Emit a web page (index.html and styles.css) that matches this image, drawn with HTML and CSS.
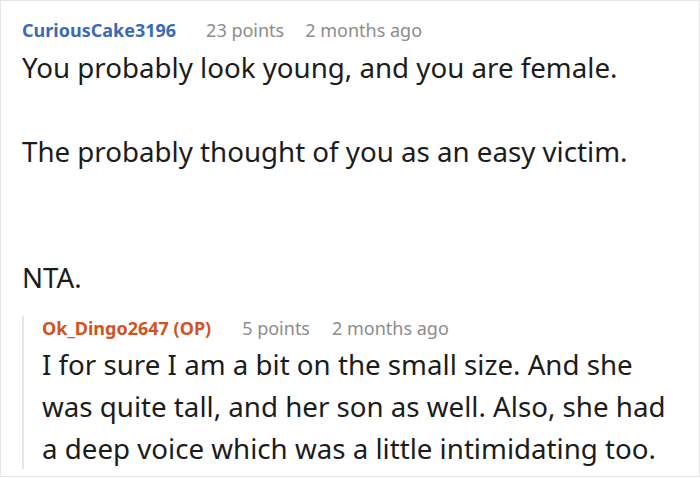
FILE: index.html
```html
<!DOCTYPE html>
<html>
<head>
<meta charset="utf-8">
<link rel="stylesheet" href="styles.css">
</head>
<body>
<div class="page">
  <div class="comment">
    <div class="meta">
      <span class="author">CuriousCake3196</span>
      <span class="points">23 points</span>
      <span class="time">2 months ago</span>
    </div>
    <div class="body">You probably look young, and you are female.<br><br>The probably thought of you as an easy victim.<br><br><br>NTA.</div>
  </div>
  <div class="reply">
    <div class="meta">
      <span class="author op">Ok_Dingo2647 (OP)</span>
      <span class="points">5 points</span>
      <span class="time">2 months ago</span>
    </div>
    <div class="body">I for sure I am a bit on the small size. And she was quite tall, and her son as well. Also, she had a deep voice which was a little intimidating too.</div>
  </div>
</div>
</body>
</html>
```

FILE: styles.css
```css
html, body {
  margin: 0;
  padding: 0;
  background: #ffffff;
}
body {
  font-family: "Noto Sans", "Open Sans", sans-serif;
  color: #1c1c1c;
}
.page {
  box-sizing: border-box;
  width: 700px;
  height: 477px;
  border: 1px solid #e6e6e6;
  padding: 17px 20px 0 21px;
  overflow: hidden;
}
.meta {
  display: flex;
  align-items: baseline;
  font-size: 18px;
  line-height: 24px;
  color: #8c8c8c;
  white-space: nowrap;
}
.author {
  font-weight: 700;
  color: #3b69b5;
  margin-right: 30px;
}
.author.op {
  color: #d4521d;
  margin-right: 31px;
}
.points {
  margin-right: 21px;
}
.reply .points {
  margin-right: 22px;
}
.body {
  font-size: 27.7px;
  line-height: 42px;
  margin-top: 4px;
}
.reply {
  margin-top: 27px;
  border-left: 2px solid #e6e6e6;
  padding-left: 18px;
}
.reply .meta {
  margin-top: -9px;
}
.reply .body {
  margin-top: 3px;
  margin-bottom: -9px;
}
```
